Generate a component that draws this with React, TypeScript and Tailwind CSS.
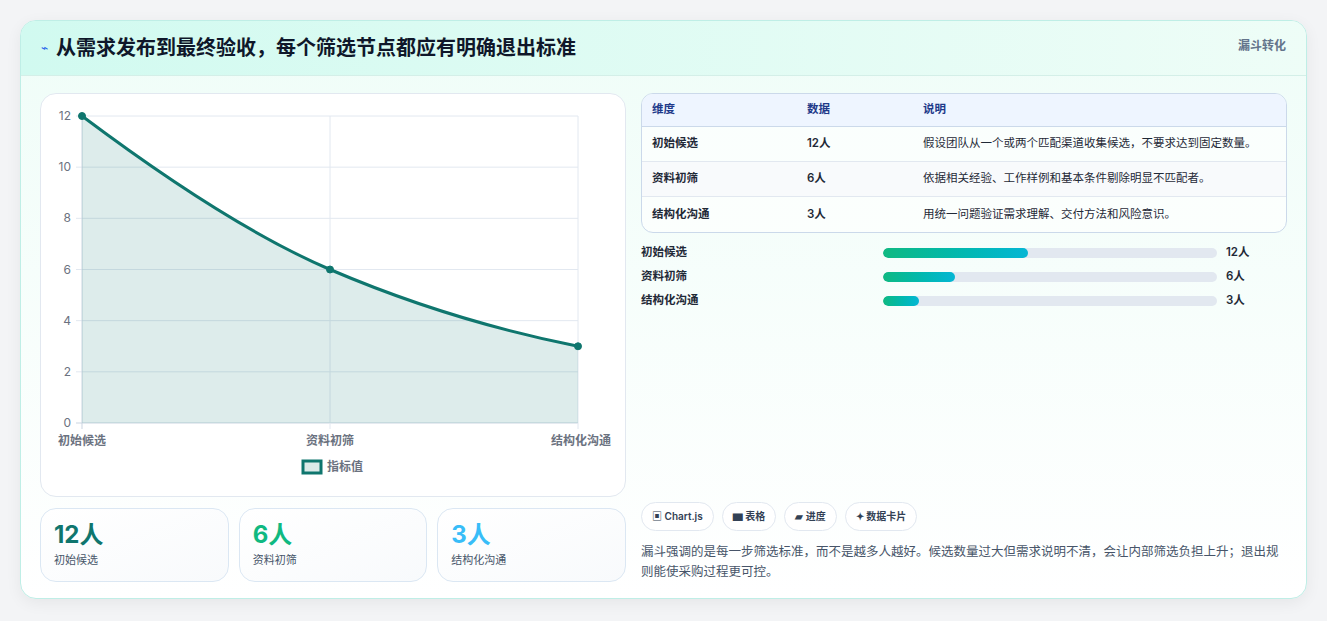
import React from 'react';

const rows = [
  { name: '初始候选', value: '12人', desc: '假设团队从一个或两个匹配渠道收集候选，不要求达到固定数量。' },
  { name: '资料初筛', value: '6人', desc: '依据相关经验、工作样例和基本条件剔除明显不匹配者。' },
  { name: '结构化沟通', value: '3人', desc: '用统一问题验证需求理解、交付方法和风险意识。' },
];

const bars = [
  { name: '初始候选', value: '12人', pct: 43.5 },
  { name: '资料初筛', value: '6人', pct: 21.5 },
  { name: '结构化沟通', value: '3人', pct: 10.7 },
];

function Chart() {
  const x0 = 41, x1 = 289, x2 = 537;
  const y = (v: number) => 329 - (v / 12) * 307;
  const p0 = [x0, y(12)], p1 = [x1, y(6)], p2 = [x2, y(3)];
  const line = `M${p0[0]},${p0[1]} C${p0[0] + 100},${p0[1] + 75} ${p1[0] - 70},${p1[1] - 30} ${p1[0]},${p1[1]} C${p1[0] + 70},${p1[1] + 30} ${p2[0] - 100},${p2[1] - 20} ${p2[0]},${p2[1]}`;
  const area = `${line} L${x2},329 L${x0},329 Z`;
  return (
    <svg width="585" height="403" viewBox="0 0 585 403" className="block" style={{ fontFamily: 'Inter, "Noto Sans CJK SC", sans-serif' }}>
      {[0, 2, 4, 6, 8, 10, 12].map((v) => (
        <g key={v}>
          <line x1={35} x2={537} y1={y(v)} y2={y(v)} stroke={v === 0 ? '#cbd5e1' : '#e2e8f0'} />
          <text x={30} y={y(v) + 4} fontSize="12" fill="#6b7280" textAnchor="end">{v}</text>
        </g>
      ))}
      {[x0, x1, x2].map((x) => (
        <line key={x} x1={x} x2={x} y1={22} y2={335} stroke={x === x0 ? '#cbd5e1' : '#e2e8f0'} />
      ))}
      <path d={area} fill="#0f766e" fillOpacity="0.14" />
      <path d={line} fill="none" stroke="#0f766e" strokeWidth="3" />
      {[p0, p1, p2].map((p, i) => (
        <circle key={i} cx={p[0]} cy={p[1]} r="3.5" fill="#0f766e" stroke="#0f766e" />
      ))}
      <text x={x0} y={351} fontSize="12" fontWeight="600" fill="#6b7280" textAnchor="middle">初始候选</text>
      <text x={x1} y={351} fontSize="12" fontWeight="600" fill="#6b7280" textAnchor="middle">资料初筛</text>
      <text x={x2 + 33} y={351} fontSize="12" fontWeight="600" fill="#6b7280" textAnchor="end">结构化沟通</text>
      <rect x={262} y={367} width={18} height={12} fill="#dbeae8" stroke="#0f766e" strokeWidth="3" />
      <text x={286} y={377} fontSize="12" fontWeight="600" fill="#6b7280">指标值</text>
    </svg>
  );
}

export default function App() {
  return (
    <div className="min-h-[621px] bg-[#f3f4f6] pt-5 px-5" style={{ fontFamily: 'Inter, "Noto Sans CJK SC", sans-serif' }}>
      <div className="w-[1287px] h-[579px] rounded-2xl border border-[#bfeee6] bg-gradient-to-b from-[#effdf8] to-white shadow-[0_4px_16px_rgba(0,0,0,0.06)] overflow-hidden">
        <div className="h-[55px] bg-gradient-to-r from-[#d1faf0] to-[#eefdf7] border-b border-[#d4efe8] flex items-start justify-between px-5">
          <div className="flex items-center gap-2 mt-[15px]">
            <span className="text-[#2563eb] text-xs">⌁</span>
            <h1 className="text-[20px] font-bold text-[#0f172a] leading-6">从需求发布到最终验收，每个筛选节点都应有明确退出标准</h1>
          </div>
          <span className="mt-[17px] text-xs font-semibold text-[#64748b]">漏斗转化</span>
        </div>
        <div className="flex gap-[15px] px-[19px] pt-[17px]">
          <div className="w-[586px] flex flex-col gap-[11px]">
            <div className="h-[404px] rounded-2xl border border-[#e2e8f0] bg-white overflow-hidden">
              <Chart />
            </div>
            <div className="grid grid-cols-3 gap-[10px]">
              {[
                { v: '12人', l: '初始候选', c: 'text-[#0f766e]' },
                { v: '6人', l: '资料初筛', c: 'text-[#10b981]' },
                { v: '3人', l: '结构化沟通', c: 'text-[#38bdf8]' },
              ].map((s) => (
                <div key={s.l} className="h-[74px] rounded-2xl border border-[#dbe7f3] bg-gradient-to-br from-white to-[#f8fafc] px-[13px] pt-[12px]">
                  <div className={`text-[24px] font-bold leading-7 ${s.c}`}>{s.v}</div>
                  <div className="text-[11px] text-[#475569] mt-[3px]">{s.l}</div>
                </div>
              ))}
            </div>
          </div>
          <div className="flex-1 flex flex-col">
            <div className="rounded-xl border border-[#cbd9ea] overflow-hidden bg-white/60">
              <div className="grid grid-cols-[155px_116px_1fr] h-[33px] items-center px-[10px] bg-[#eef5ff] border-b border-[#cbd9ea] text-[11.5px] font-semibold text-[#1e3a8a]">
                <span>维度</span><span>数据</span><span>说明</span>
              </div>
              {rows.map((r, i) => (
                <div key={r.name} className={`grid grid-cols-[155px_116px_1fr] h-[35px] items-center px-[10px] text-[11.5px] text-[#1f2937] ${i < 2 ? 'border-b border-[#e2e8f0]' : ''} ${i === 1 ? 'bg-[#f8fafc]' : ''}`}>
                  <span className="font-semibold">{r.name}</span>
                  <span className="font-semibold">{r.value}</span>
                  <span>{r.desc}</span>
                </div>
              ))}
            </div>
            <div className="flex flex-col gap-[7px] mt-[11px]">
              {bars.map((b) => (
                <div key={b.name} className="flex items-center h-[17px] text-[11.5px] font-semibold text-[#1f2937]">
                  <span className="w-[242px]">{b.name}</span>
                  <div className="w-[334px] h-[10px] rounded-full bg-[#e2e8f0] overflow-hidden">
                    <div className="h-full rounded-full bg-gradient-to-r from-[#10b981] to-[#06b6d4]" style={{ width: `${b.pct}%` }} />
                  </div>
                  <span className="ml-[9px]">{b.value}</span>
                </div>
              ))}
            </div>
            <div className="flex gap-2 mt-[193px]">
              {['▣ Chart.js', '▆ 表格', '▰ 进度', '✦ 数据卡片'].map((c) => (
                <span key={c} className="h-[29px] px-[10px] flex items-center rounded-full border border-[#e2e8f0] bg-white text-[10px] font-semibold text-[#334155]">{c}</span>
              ))}
            </div>
            <p className="mt-[11px] text-[12.5px] leading-5 text-[#475569] w-[640px]">漏斗强调的是每一步筛选标准，而不是越多人越好。候选数量过大但需求说明不清，会让内部筛选负担上升；退出规则能使采购过程更可控。</p>
          </div>
        </div>
      </div>
    </div>
  );
}
